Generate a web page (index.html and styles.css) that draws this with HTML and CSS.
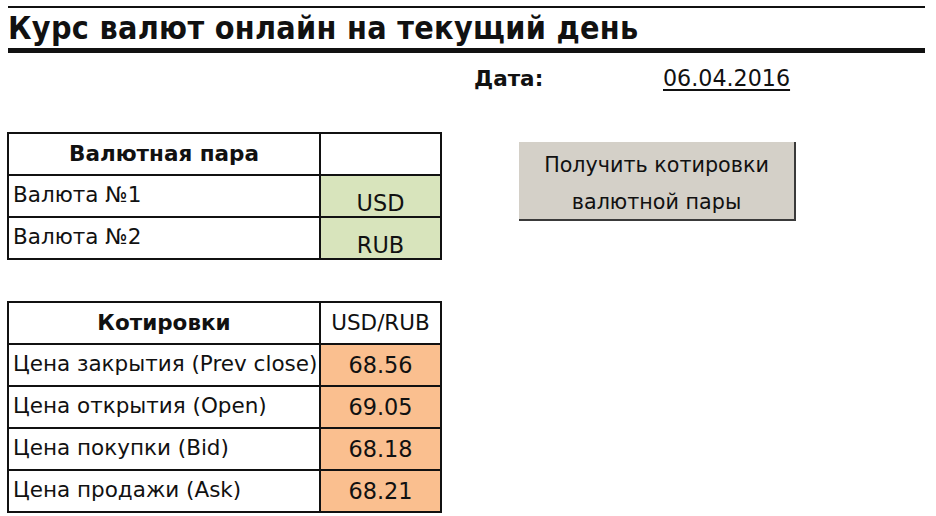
FILE: index.html
```html
<!DOCTYPE html>
<html lang="ru">
<head>
<meta charset="utf-8">
<title>Курс валют онлайн</title>
<link rel="stylesheet" href="styles.css">
</head>
<body>
<div class="sheet">
  <header class="head">
    <h1 class="title">Курс валют онлайн на текущий день</h1>
  </header>

  <div class="date-row">
    <span class="date-label">Дата:</span>
    <span class="date-value">06.04.2016</span>
  </div>

  <div class="main">
    <div class="tables">
      <table class="grid">
        <tr>
          <th class="name">Валютная пара</th>
          <th class="val"></th>
        </tr>
        <tr>
          <td class="name">Валюта №1</td>
          <td class="val green">USD</td>
        </tr>
        <tr>
          <td class="name">Валюта №2</td>
          <td class="val green">RUB</td>
        </tr>
      </table>

      <table class="grid quotes">
        <tr>
          <th class="name">Котировки</th>
          <th class="val pair">USD/RUB</th>
        </tr>
        <tr>
          <td class="name">Цена закрытия (Prev close)</td>
          <td class="val orange">68.56</td>
        </tr>
        <tr>
          <td class="name">Цена открытия (Open)</td>
          <td class="val orange">69.05</td>
        </tr>
        <tr>
          <td class="name">Цена покупки (Bid)</td>
          <td class="val orange">68.18</td>
        </tr>
        <tr>
          <td class="name">Цена продажи (Ask)</td>
          <td class="val orange">68.21</td>
        </tr>
      </table>
    </div>

    <div class="side">
      <button class="fetch" type="button">Получить котировки<br>валютной пары</button>
    </div>
  </div>
</div>
</body>
</html>
```

FILE: styles.css
```css
html, body {
  margin: 0;
  padding: 0;
  background: #ffffff;
}

.sheet {
  width: 936px;
  height: 516px;
  overflow: hidden;
  font-family: "DejaVu Sans", Verdana, sans-serif;
  color: #111;
}

/* Title band between a thin rule and a heavy rule */
.head {
  margin: 6px 11px 0 8px;
  border-top: 2px solid #111;
  border-bottom: 5px solid #111;
  height: 40px;
}

.title {
  margin: 0;
  font-family: "DejaVu Sans Condensed", "DejaVu Sans", sans-serif;
  font-weight: bold;
  font-size: 32px;
  line-height: 40px;
  letter-spacing: 0.3px;
  white-space: nowrap;
}

.date-row {
  display: flex;
  align-items: baseline;
  padding: 12px 0 0 474px;
  height: 30px;
}

.date-label {
  font-weight: bold;
  font-size: 21.5px;
  width: 189px;
}

.date-value {
  font-size: 22.2px;
  text-decoration: underline;
  text-underline-offset: 3px;
  text-decoration-thickness: 2px;
}

.main {
  display: flex;
  padding: 37px 0 0 7px;
}

.tables {
  display: flex;
  flex-direction: column;
  gap: 41px;
}

.grid {
  border-collapse: collapse;
  table-layout: fixed;
  width: 435px;
}

.grid tr {
  height: 42px;
}

.grid th,
.grid td {
  border: 2px solid #111;
  padding: 0;
  line-height: 24px;
  white-space: nowrap;
}

.grid .name {
  width: 310px;
  padding: 0 0 2px 4px;
  text-align: left;
  font-size: 21.5px;
  vertical-align: middle;
}

.grid th.name {
  text-align: center;
  font-weight: bold;
  font-size: 21.5px;
  padding: 0;
}

/* pair cells sit on the bottom of the cell */
.grid .val {
  text-align: center;
  font-size: 22.4px;
  vertical-align: bottom;
  padding-bottom: 1px;
}

/* quote values are centred in their cells */
.quotes .val {
  vertical-align: middle;
  padding: 0 0 1px;
}

.grid th.pair {
  font-weight: normal;
  font-size: 21.5px;
  vertical-align: middle;
  padding-bottom: 0;
}

.green { background: #d8e4bc; }
.orange { background: #fabf8f; }

.side {
  padding: 10px 0 0 77px;
}

.fetch {
  display: block;
  width: 277px;
  height: 79px;
  margin: 0;
  padding: 5px 0 0;
  background: #d4d0c8;
  border: 0;
  border-right: 2px solid #3a3a3a;
  border-bottom: 2px solid #3a3a3a;
  font-family: "DejaVu Sans", Verdana, sans-serif;
  font-size: 20.7px;
  line-height: 37px;
  color: #111;
  text-align: center;
}
```
